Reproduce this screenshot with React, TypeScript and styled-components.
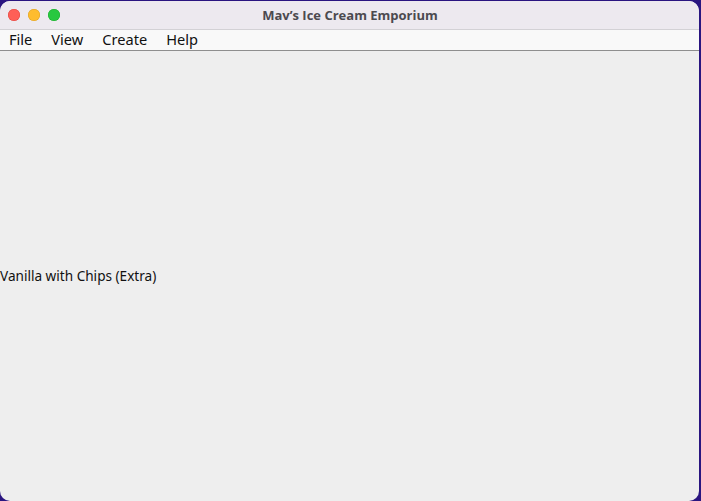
import React from "react";
import styled, { createGlobalStyle } from "styled-components";

const Global = createGlobalStyle`
  html, body { margin: 0; padding: 0; }
  body {
    background: #2a1580;
    width: 701px;
    height: 501px;
    overflow: hidden;
    font-family: "Noto Sans", "DejaVu Sans", sans-serif;
  }
`;

const Desktop = styled.div`
  width: 701px;
  height: 501px;
  padding-top: 1px;
  box-sizing: border-box;
`;

const Window = styled.div`
  width: 699px;
  height: 500px;
  border-radius: 10px;
  overflow: hidden;
  background: #eeeeee;
  display: flex;
  flex-direction: column;
`;

const TitleBar = styled.div`
  height: 28px;
  flex: none;
  background: #ede9ef;
  border-bottom: 1px solid #d3d1d5;
  display: flex;
  align-items: center;
  position: relative;
`;

const Lights = styled.div`
  display: flex;
  gap: 8px;
  padding-left: 8px;
  position: absolute;
  left: 0;
  top: 8px;
`;

const Light = styled.span<{ $c: string; $b: string }>`
  width: 12px;
  height: 12px;
  border-radius: 50%;
  background: ${(p) => p.$c};
  box-shadow: inset 0 0 0 0.5px ${(p) => p.$b};
`;

const Title = styled.div`
  flex: 1;
  text-align: center;
  font-family: "Open Sans", "Noto Sans", sans-serif;
  font-weight: 700;
  font-size: 13px;
  color: #4c4a4f;
  padding-left: 1px;
`;

const MenuBar = styled.div`
  height: 21px;
  flex: none;
  box-sizing: border-box;
  padding-bottom: 2px;
  background: #f9f9f9;
  border-bottom: 1px solid #8e8e8e;
  display: flex;
  align-items: center;
  padding-left: 9px;
  gap: 19px;
`;

const MenuItem = styled.span`
  font-family: "Noto Sans", "DejaVu Sans", sans-serif;
  font-size: 14.6px;
  color: #111;
  line-height: 18px;
`;

const Content = styled.div`
  flex: 1;
  display: flex;
  align-items: center;
  padding-bottom: 2px;
`;

const Label = styled.div`
  font-family: "Noto Sans", "DejaVu Sans", sans-serif;
  font-size: 13.6px;
  color: #111;
`;

export default function App() {
  return (
    <>
      <Global />
      <Desktop>
        <Window>
          <TitleBar>
            <Lights>
              <Light $c="#fe5f57" $b="#e0443e" />
              <Light $c="#febc2e" $b="#dea123" />
              <Light $c="#28c840" $b="#1aab29" />
            </Lights>
            <Title>Mav’s Ice Cream Emporium</Title>
          </TitleBar>
          <MenuBar>
            <MenuItem>File</MenuItem>
            <MenuItem>View</MenuItem>
            <MenuItem>Create</MenuItem>
            <MenuItem>Help</MenuItem>
          </MenuBar>
          <Content>
            <Label>Vanilla with Chips (Extra)</Label>
          </Content>
        </Window>
      </Desktop>
    </>
  );
}
